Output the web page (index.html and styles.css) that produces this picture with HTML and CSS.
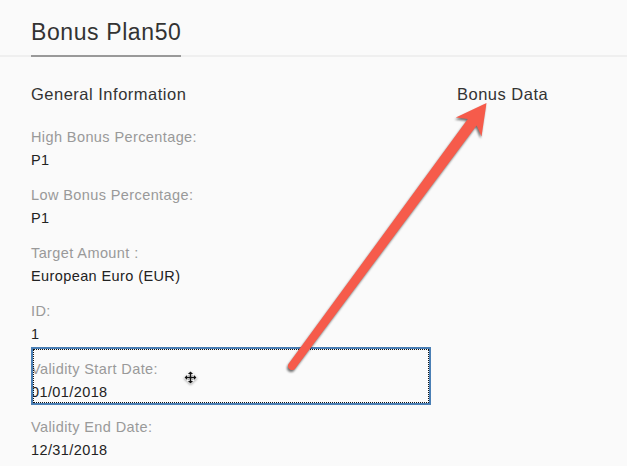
FILE: index.html
```html
<!DOCTYPE html>
<html lang="en">
<head>
<meta charset="utf-8">
<title>Bonus Plan50</title>
<link rel="stylesheet" href="styles.css">
</head>
<body>
<div class="page">
  <header class="header">
    <h1 class="title">Bonus Plan50</h1>
  </header>
  <main class="content">
    <section class="col">
      <h2 class="section-title">General Information</h2>
      <div class="fields">
        <div class="field"><div class="label">High Bonus Percentage:</div><div class="value">P1</div></div>
        <div class="field"><div class="label">Low Bonus Percentage:</div><div class="value">P1</div></div>
        <div class="field"><div class="label">Target Amount :</div><div class="value">European Euro (EUR)</div></div>
        <div class="field"><div class="label">ID:</div><div class="value">1</div></div>
        <div class="field focused"><div class="label">Validity Start Date:</div><div class="value">01/01/2018</div></div>
        <div class="field"><div class="label">Validity End Date:</div><div class="value">12/31/2018</div></div>
      </div>
    </section>
    <section class="col">
      <h2 class="section-title">Bonus Data</h2>
    </section>
  </main>
  <svg class="annotation" width="627" height="466" viewBox="0 0 627 466" xmlns="http://www.w3.org/2000/svg">
    <path class="arrow" d="M467.8,119 L455.8,117.6 L486.5,103 L481.5,136.6 L476.6,125.6 L295.2,368.4 A4,4 0 0 1 288.8,363.6 Z"/>
    <g class="cursor" transform="translate(190.5 377.5)">
      <path d="M0,-6 L2.6,-3.4 L0.8,-3.4 L0.8,-0.8 L3.4,-0.8 L3.4,-2.6 L6,0 L3.4,2.6 L3.4,0.8 L0.8,0.8 L0.8,3.4 L2.6,3.4 L0,6 L-2.6,3.4 L-0.8,3.4 L-0.8,0.8 L-3.4,0.8 L-3.4,2.6 L-6,0 L-3.4,-2.6 L-3.4,-0.8 L-0.8,-0.8 L-0.8,-3.4 L-2.6,-3.4 Z"/>
    </g>
  </svg>
</div>
</body>
</html>
```

FILE: styles.css
```css
html, body {
  margin: 0;
  padding: 0;
  background: #fafafa;
}

.page {
  position: relative;
  width: 627px;
  height: 466px;
  overflow: hidden;
  background: #fafafa;
  font-family: "Liberation Sans", Arial, sans-serif;
  color: #333;
}

.header {
  display: flex;
  padding: 19px 0 0 31px;
  border-bottom: 2px solid #efefef;
}

.title {
  margin: 0 0 -2px 0;
  font-size: 23px;
  letter-spacing: 0.6px;
  line-height: 26px;
  font-weight: normal;
  color: #333;
  padding-bottom: 10px;
  border-bottom: 2px solid #999;
}

.content {
  display: grid;
  grid-template-columns: 400px 1fr;
  column-gap: 26px;
  padding: 27px 0 0 31px;
}

.section-title {
  margin: 0;
  font-size: 16.5px;
  letter-spacing: 0.5px;
  line-height: 20px;
  font-weight: normal;
  color: #333;
}

.fields {
  display: flex;
  flex-direction: column;
  margin-top: 11px;
}

.field {
  display: flex;
  flex-direction: column;
  gap: 3px;
  padding: 12px 0 3px 0;
  font-size: 14.5px;
  letter-spacing: 0.4px;
  line-height: 20px;
}

.label {
  color: #999;
}

.value {
  color: #222;
}

.field.focused {
  position: relative;
}

.field.focused::after {
  content: "";
  position: absolute;
  inset: 0;
  border: 2px solid #4a7fb5;
}

.field.focused::before {
  content: "";
  position: absolute;
  inset: 2px;
  border: 1px dotted #111;
}

.annotation {
  position: absolute;
  left: 0;
  top: 0;
  pointer-events: none;
}

.arrow {
  fill: #f65b4b;
  filter: drop-shadow(-1px 2px 1.2px rgba(0, 0, 0, 0.55));
}

.cursor path {
  fill: #111;
  stroke: #fff;
  stroke-width: 1.2;
  paint-order: stroke;
  filter: drop-shadow(0 1px 1px rgba(0, 0, 0, 0.35));
}
```
